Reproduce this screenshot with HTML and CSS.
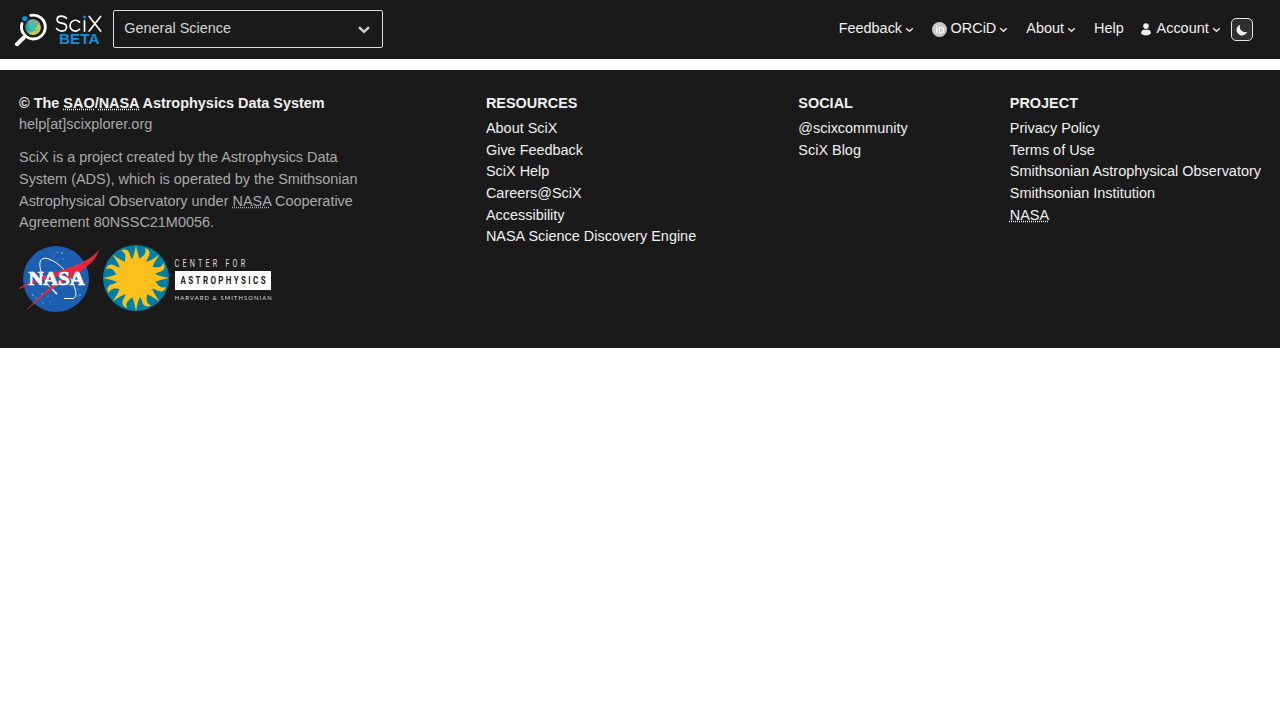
FILE: index.html
```html
<!DOCTYPE html>
<html lang="en">
<head>
<meta charset="utf-8">
<title>SciX</title>
<link rel="stylesheet" href="styles.css">
</head>
<body>
<header class="navbar">
  <a class="brand">
    <svg class="brand-logo" width="90" height="36" viewBox="0 0 90 36">
      <path d="M3 33.2 9.6 26.8" stroke="#fff" stroke-width="4" stroke-linecap="round"/>
      <path d="M16.8 4.4A11.9 11.9 0 1 1 8 12.6" fill="none" stroke="#fff" stroke-width="2.9" stroke-linecap="round"/>
      <circle cx="10.8" cy="7.5" r="2.6" fill="#0a93dc"/>
      <circle cx="19" cy="16.2" r="7.7" fill="#45bfa5"/>
      <path d="M12.8 11.6A7.7 7.7 0 0 1 26.7 16Q20 10 12.8 11.6Z" fill="#90a09b"/>
      <path d="M26.7 15.5A7.7 7.7 0 0 1 14 22Q22.5 21.5 23.7 12.5Z" fill="#d1c946"/>
      <path d="M12 19A7.7 7.7 0 0 1 14.5 10Q13 15 16 20Z" fill="#249fa8"/>
      <path d="M12 18.5Q19 21 25 18.5M14.5 10.5Q14 17 17 21" fill="none" stroke="#369f9b" stroke-width=".6"/>
      <g fill="none" stroke="#fff" stroke-width="1.7" stroke-linecap="round" stroke-linejoin="round">
        <path d="M52.4 7.2Q50.3 5.1 47.3 5.1Q43.1 5.1 43.1 8.6Q43.1 11.6 47.6 12.2Q52.5 12.8 52.5 16.3Q52.5 20.1 47.7 20.1Q44.4 20.1 42.5 17.6"/>
        <path d="M65.5 11.1A5.4 5.4 0 1 0 65.5 18.2M70.5 9.9V20.1M75.2 5.5 86.6 20.1M86.6 5.5 75.2 20.1"/>
      </g>
      <circle cx="70.5" cy="6.1" r="1.5" fill="#0a93dc"/>
      <text x="45" y="33.2" class="beta" textLength="40.5" lengthAdjust="spacingAndGlyphs">BETA</text>
    </svg>
  </a>
  <div class="select"><span>General Science</span>
    <svg width="14" height="10" viewBox="0 0 14 10"><path d="m2 2.2 5 4.7 5-4.7" fill="none" stroke="#d0d0d0" stroke-width="2.4"/></svg>
  </div>
  <nav class="menu">
    <a class="item feedback">Feedback<svg class="chev" viewBox="0 0 9 6"><path d="m1.2 1.2 3.3 3.1 3.3-3.1"/></svg></a>
    <a class="item orcid"><svg class="orcid-icon" width="15" height="15" viewBox="0 0 15 15"><circle cx="7.5" cy="7.5" r="7.5" fill="#c9c9c9"/><path d="M4.8 5.7V11.2M7.5 5.5V10.7H9.2Q11.7 10.5 11.7 8.1Q11.7 5.6 9.2 5.5Z" fill="none" stroke="#fff" stroke-width="1.2"/><circle cx="4.8" cy="4" r=".8" fill="#fff"/></svg>ORCiD<svg class="chev" viewBox="0 0 9 6"><path d="m1.2 1.2 3.3 3.1 3.3-3.1"/></svg></a>
    <a class="item about">About<svg class="chev" viewBox="0 0 9 6"><path d="m1.2 1.2 3.3 3.1 3.3-3.1"/></svg></a>
    <a class="item help">Help</a>
    <a class="item account"><svg class="user-icon" width="10" height="13" viewBox="0 0 10 13"><circle cx="5" cy="3.1" r="2.8" fill="#ededed"/><path d="M0 10.6Q.4 6.8 3 6.8H7Q9.6 6.8 10 10.6Q8 12.5 5 12.5T0 10.6Z" fill="#ededed"/></svg>Account<svg class="chev" viewBox="0 0 9 6"><path d="m1.2 1.2 3.3 3.1 3.3-3.1"/></svg></a>
    <button class="theme" aria-label="Dark mode"><svg width="12" height="12" viewBox="0 0 12 12"><path d="M4.2.7A5.5 5.5 0 1 0 11.2 7.8A5.4 5.4 0 0 1 4.2.7Z" fill="#f0f0f0"/></svg></button>
  </nav>
</header>
<footer class="footer">
  <section class="intro">
    <h2>© The <abbr>SAO</abbr>/<abbr>NASA</abbr> Astrophysics Data System</h2>
    <p class="mail">help[at]scixplorer.org</p>
    <p class="desc">SciX is a project created by the Astrophysics Data System (ADS), which is operated by the Smithsonian Astrophysical Observatory under <abbr>NASA</abbr> Cooperative Agreement 80NSSC21M0056.</p>
    <div class="logos">
      <svg class="nasa" width="80" height="68" viewBox="0 0 80 68">
        <circle cx="37" cy="34" r="33" fill="#1c5fb0"/>
        <g fill="#a9c9ee"><circle cx="38" cy="7" r=".6"/><circle cx="43" cy="8" r=".8"/><circle cx="35" cy="11" r=".5"/><circle cx="44" cy="14" r=".6"/><circle cx="31" cy="15" r=".5"/><circle cx="39" cy="15" r=".5"/><circle cx="14" cy="50" r=".7"/><circle cx="17" cy="53" r=".5"/><circle cx="23" cy="49" r=".8"/><circle cx="24" cy="58" r=".6"/><circle cx="29" cy="51" r=".6"/><circle cx="59" cy="44" r=".6"/><circle cx="61" cy="50" r=".8"/><circle cx="59" cy="51" r=".6"/><circle cx="31" cy="57" r=".5"/><circle cx="57" cy="20" r=".5"/></g>
        <path d="M37 48C26 40 17 20 22.5 14.5C29 9 48 24 53 36C57 45 59 52 54 53.5H45" fill="none" stroke="#fff" stroke-width="1"/>
        <path d="m32 42 6.5 6.5-1.4 1.3Z" fill="#fff"/>
        <path d="M0 43Q22 31 46 24Q70 17 80 5Q76 18 61 25.5Q50 27 40 31Q18 36 0 44Z" fill="#e7263e"/>
        <path d="M8 64.5Q28 42 52 27L70 17Q66 24 58 29.5Q34 40 8 65Z" fill="#e7263e"/>
        <text class="nasa-word" x="9.5" y="40" textLength="56" lengthAdjust="spacingAndGlyphs">NASA</text>
      </svg>
      <svg class="sun" width="66" height="66" viewBox="-33 -33 66 66">
        <defs>
          <path id="ray" d="M-5-16Q-1.4-24 0-33Q1.4-24 5-16Z"/>
          <path id="wave" d="M-4.5-16C-4-21-1.8-22-1-25C-.5-28-1.5-29.5-3.2-31C1-32 4.1-29 3.7-25C3.4-22 2.8-20 5-16Z"/>
        </defs>
        <circle r="33" fill="#007fa4"/>
        <g fill="#fcc01c">
          <circle r="19"/>
          <use href="#ray"/><use href="#ray" transform="rotate(45)"/><use href="#ray" transform="rotate(90)"/><use href="#ray" transform="rotate(135)"/><use href="#ray" transform="rotate(180)"/><use href="#ray" transform="rotate(225)"/><use href="#ray" transform="rotate(270)"/><use href="#ray" transform="rotate(315)"/>
          <use href="#wave" transform="rotate(22)"/><use href="#wave" transform="rotate(67)"/><use href="#wave" transform="rotate(112)"/><use href="#wave" transform="rotate(157)"/><use href="#wave" transform="rotate(202)"/><use href="#wave" transform="rotate(247)"/><use href="#wave" transform="rotate(292)"/><use href="#wave" transform="rotate(337)"/>
        </g>
      </svg>
      <svg class="cfa" width="98" height="44" viewBox="0 0 98 44">
        <text class="cfa-top" transform="translate(.6 8.6) scale(.72 1)" textLength="98">CENTER FOR</text>
        <path d="M1 13H97V32H1Z" fill="#fff"/>
        <text class="cfa-mid" transform="translate(6.5 26.2) scale(.76 1)" textLength="112">ASTROPHYSICS</text>
        <text class="cfa-low" x=".7" y="42" textLength="97">HARVARD &amp; SMITHSONIAN</text>
      </svg>
    </div>
  </section>
  <section class="links"><h2>RESOURCES</h2><a>About SciX</a><a>Give Feedback</a><a>SciX Help</a><a>Careers@SciX</a><a>Accessibility</a><a>NASA Science Discovery Engine</a></section>
  <section class="links"><h2>SOCIAL</h2><a>@scixcommunity</a><a>SciX Blog</a></section>
  <section class="links"><h2>PROJECT</h2><a>Privacy Policy</a><a>Terms of Use</a><a>Smithsonian Astrophysical Observatory</a><a>Smithsonian Institution</a><a><abbr>NASA</abbr></a></section>
</footer>
</body>
</html>
```
FILE: styles.css
```css
* { box-sizing: border-box; }
body { margin: 0; background: #fff; font: 14.45px/21.67px "Liberation Sans", Arial, sans-serif; color: #f0f0f0; }
h2, p { margin: 0; font-size: inherit; }
svg { flex: none; }
abbr { text-decoration: underline dotted; }
.navbar { height: 59px; background: #1a1a1a; display: flex; align-items: center; padding: 0 27px 0 14px; }
.brand { display: flex; width: 99px; }
.brand-logo { margin-bottom: 1px; }
.beta { font: bold 14.6px "Liberation Sans", Arial, sans-serif; fill: #0a93dc; }
.select { width: 270px; height: 38px; margin-bottom: 1px; border: 1px solid #dedede; border-radius: 2px; display: flex; align-items: center; justify-content: space-between; padding: 0 11px 0 10.3px; color: #d4d4d4; }
.select svg { margin-top: 2px; }
.menu { margin-left: auto; display: flex; align-items: center; }
.item { display: flex; align-items: center; height: 22px; margin-bottom: 1px; }
.chev { width: 9px; height: 6px; margin: 2px 0 0 3px; fill: none; stroke: #e4e4e4; stroke-width: 1.5; }
.feedback, .orcid, .about { margin-right: 18px; }
.help { margin-right: 16.8px; }
.account { margin-right: 10.3px; }
.orcid-icon { margin: 1px 3.5px 0 0; }
.user-icon { margin: 1px 6px 0 0; }
.theme { width: 22px; height: 23px; padding: 0; border: 1px solid #e6e6e6; border-radius: 5px; background: #303030; display: flex; align-items: center; justify-content: center; }
.footer { margin-top: 11px; height: 278px; background: #1a1a1a; padding: 22.6px 19px 0; display: flex; justify-content: space-between; }
.intro { width: 364.8px; color: #aaa; }
.intro h2 { color: #f0f0f0; }
.desc { margin-top: 11.3px; width: 350px; }
.logos { display: flex; align-items: flex-start; margin-top: 10.7px; }
.sun { margin: 0 5px 0 4px; }
.cfa { margin-top: 13px; }
.nasa-word { font: bold 18px "Liberation Serif", serif; fill: #fff; stroke: #fff; stroke-width: .7px; }
.cfa-top { font: 10px Roboto, sans-serif; fill: #ddd; }
.cfa-mid { font: bold 10.5px Roboto, sans-serif; fill: #1a1a1a; }
.cfa-low { font: 5.8px Lato, sans-serif; fill: #ddd; }
.links { display: flex; flex-direction: column; }
.links h2 { margin-bottom: 3.6px; }
```
